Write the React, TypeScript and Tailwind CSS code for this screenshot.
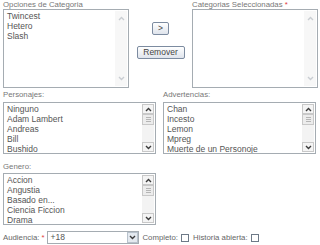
import React from "react";

const font = { fontFamily: '"Liberation Sans", Arial, sans-serif' };

function Chevron({ up, color }: { up?: boolean; color: string }) {
  return (
    <svg width="7" height="5" viewBox="0 0 7 5">
      <path
        d={up ? "M1 4 L3.5 1.5 L6 4" : "M1 1 L3.5 3.5 L6 1"}
        fill="none"
        stroke={color}
        strokeWidth="1.4"
      />
    </svg>
  );
}

function DisabledScroll() {
  return (
    <div className="w-[12px] h-full bg-[#f7f7f7] flex flex-col justify-between items-center py-[2px]">
      <div className="w-[11px] h-[11px] flex items-center justify-center">
        <Chevron up color="#c9cdd2" />
      </div>
      <div className="w-[11px] h-[11px] flex items-center justify-center">
        <Chevron color="#c9cdd2" />
      </div>
    </div>
  );
}

function ActiveScroll() {
  return (
    <div className="w-[12px] h-full bg-[#f3f3f3] flex flex-col">
      <div className="w-[12px] h-[10px] border border-[#c8c8c8] bg-[#f4f4f4] flex items-center justify-center">
        <Chevron up color="#3b3b3b" />
      </div>
      <div className="w-[12px] h-[11px] border border-[#c8c8c8] bg-[#ececec] flex flex-col items-center justify-center gap-[1px]">
        <div className="w-[5px] h-px bg-[#b5b5b5]" />
        <div className="w-[5px] h-px bg-[#b5b5b5]" />
        <div className="w-[5px] h-px bg-[#b5b5b5]" />
      </div>
      <div className="flex-1" />
      <div className="w-[12px] h-[10px] border border-[#c8c8c8] bg-[#f4f4f4] flex items-center justify-center">
        <Chevron color="#3b3b3b" />
      </div>
    </div>
  );
}

function ListBox({
  items,
  w,
  h,
  active,
}: {
  items: string[];
  w: string;
  h: string;
  active?: boolean;
}) {
  return (
    <div className={`${w} ${h} border border-[#a5acb2] bg-white flex`}>
      <div className="flex-1 pl-[3px] pt-[1px] text-[8.5px] leading-[10px] text-[#555] overflow-hidden">
        {items.map((t) => (
          <div key={t} className="whitespace-nowrap">
            {t}
          </div>
        ))}
      </div>
      <div className="p-[1px] h-full">{active ? <ActiveScroll /> : <DisabledScroll />}</div>
    </div>
  );
}

function Label({ children }: { children: React.ReactNode }) {
  return <div className="text-[7.8px] leading-[9px] text-[#777] whitespace-nowrap">{children}</div>;
}

function Btn({ children, cls }: { children: React.ReactNode; cls: string }) {
  return (
    <div
      className={`${cls} border border-[#7c8ba0] rounded-[2px] bg-gradient-to-b from-white to-[#dfe4ec] flex items-center justify-center text-[8.5px] text-[#444]`}
    >
      {children}
    </div>
  );
}

function Check() {
  return <div className="w-[8px] h-[8px] border border-[#6e7a88] bg-white" />;
}

export default function App() {
  return (
    <div className="w-[320px] h-[245px] bg-white overflow-hidden pl-[3px]" style={font}>
      {/* Row 1 */}
      <div className="flex">
        <div className="flex flex-col">
          <Label>Opciones de Categoria</Label>
          <div>
            <ListBox items={["Twincest", "Hetero", "Slash"]} w="w-[126px]" h="h-[79px]" />
          </div>
        </div>
        <div className="w-[63px] flex flex-col items-center pt-[22px]">
          <Btn cls="w-[17px] h-[13px]">&gt;</Btn>
          <Btn cls="w-[48px] h-[13px] mt-[11px]">Remover</Btn>
        </div>
        <div className="flex flex-col">
          <Label>
            Categorias Seleccionadas <span className="text-[#e04040]">*</span>
          </Label>
          <div>
            <ListBox items={[]} w="w-[126px]" h="h-[79px]" />
          </div>
        </div>
      </div>

      {/* Row 2 */}
      <div className="flex mt-[2px]">
        <div className="flex flex-col">
          <Label>Personajes:</Label>
          <div className="mt-[3px]">
            <ListBox
              items={["Ninguno", "Adam Lambert", "Andreas", "Bill", "Bushido"]}
              w="w-[153px]"
              h="h-[52px]"
              active
            />
          </div>
        </div>
        <div className="flex flex-col ml-[7px]">
          <Label>Advertencias:</Label>
          <div className="mt-[3px]">
            <ListBox
              items={["Chan", "Incesto", "Lemon", "Mpreg", "Muerte de un Personoje"]}
              w="w-[153px]"
              h="h-[52px]"
              active
            />
          </div>
        </div>
      </div>

      {/* Row 3 */}
      <div className="flex flex-col mt-[8px]">
        <Label>Genero:</Label>
        <div className="mt-[2px]">
          <ListBox
            items={["Accion", "Angustia", "Basado en...", "Ciencia Ficcion", "Drama"]}
            w="w-[153px]"
            h="h-[52px]"
            active
          />
        </div>
      </div>

      {/* Row 4 */}
      <div className="flex items-center mt-[6px] text-[7.8px] text-[#666]">
        <span>Audiencia:</span>
        <span className="text-[#e04040] ml-[2px]">*</span>
        <div className="ml-[3px] w-[92px] h-[13px] border border-[#a5acb2] bg-white flex items-center">
          <span className="flex-1 pl-[2px] text-[8.5px] text-[#555]">+18</span>
          <div className="w-[11px] h-[11px] border border-[#b8c2cc] bg-[#e4e9ef] flex items-center justify-center">
            <Chevron color="#3b3b3b" />
          </div>
        </div>
        <span className="ml-[3px]">Completo:</span>
        <div className="ml-[3px]">
          <Check />
        </div>
        <span className="ml-[4px]">Historia abierta:</span>
        <div className="ml-[3px]">
          <Check />
        </div>
      </div>
    </div>
  );
}
